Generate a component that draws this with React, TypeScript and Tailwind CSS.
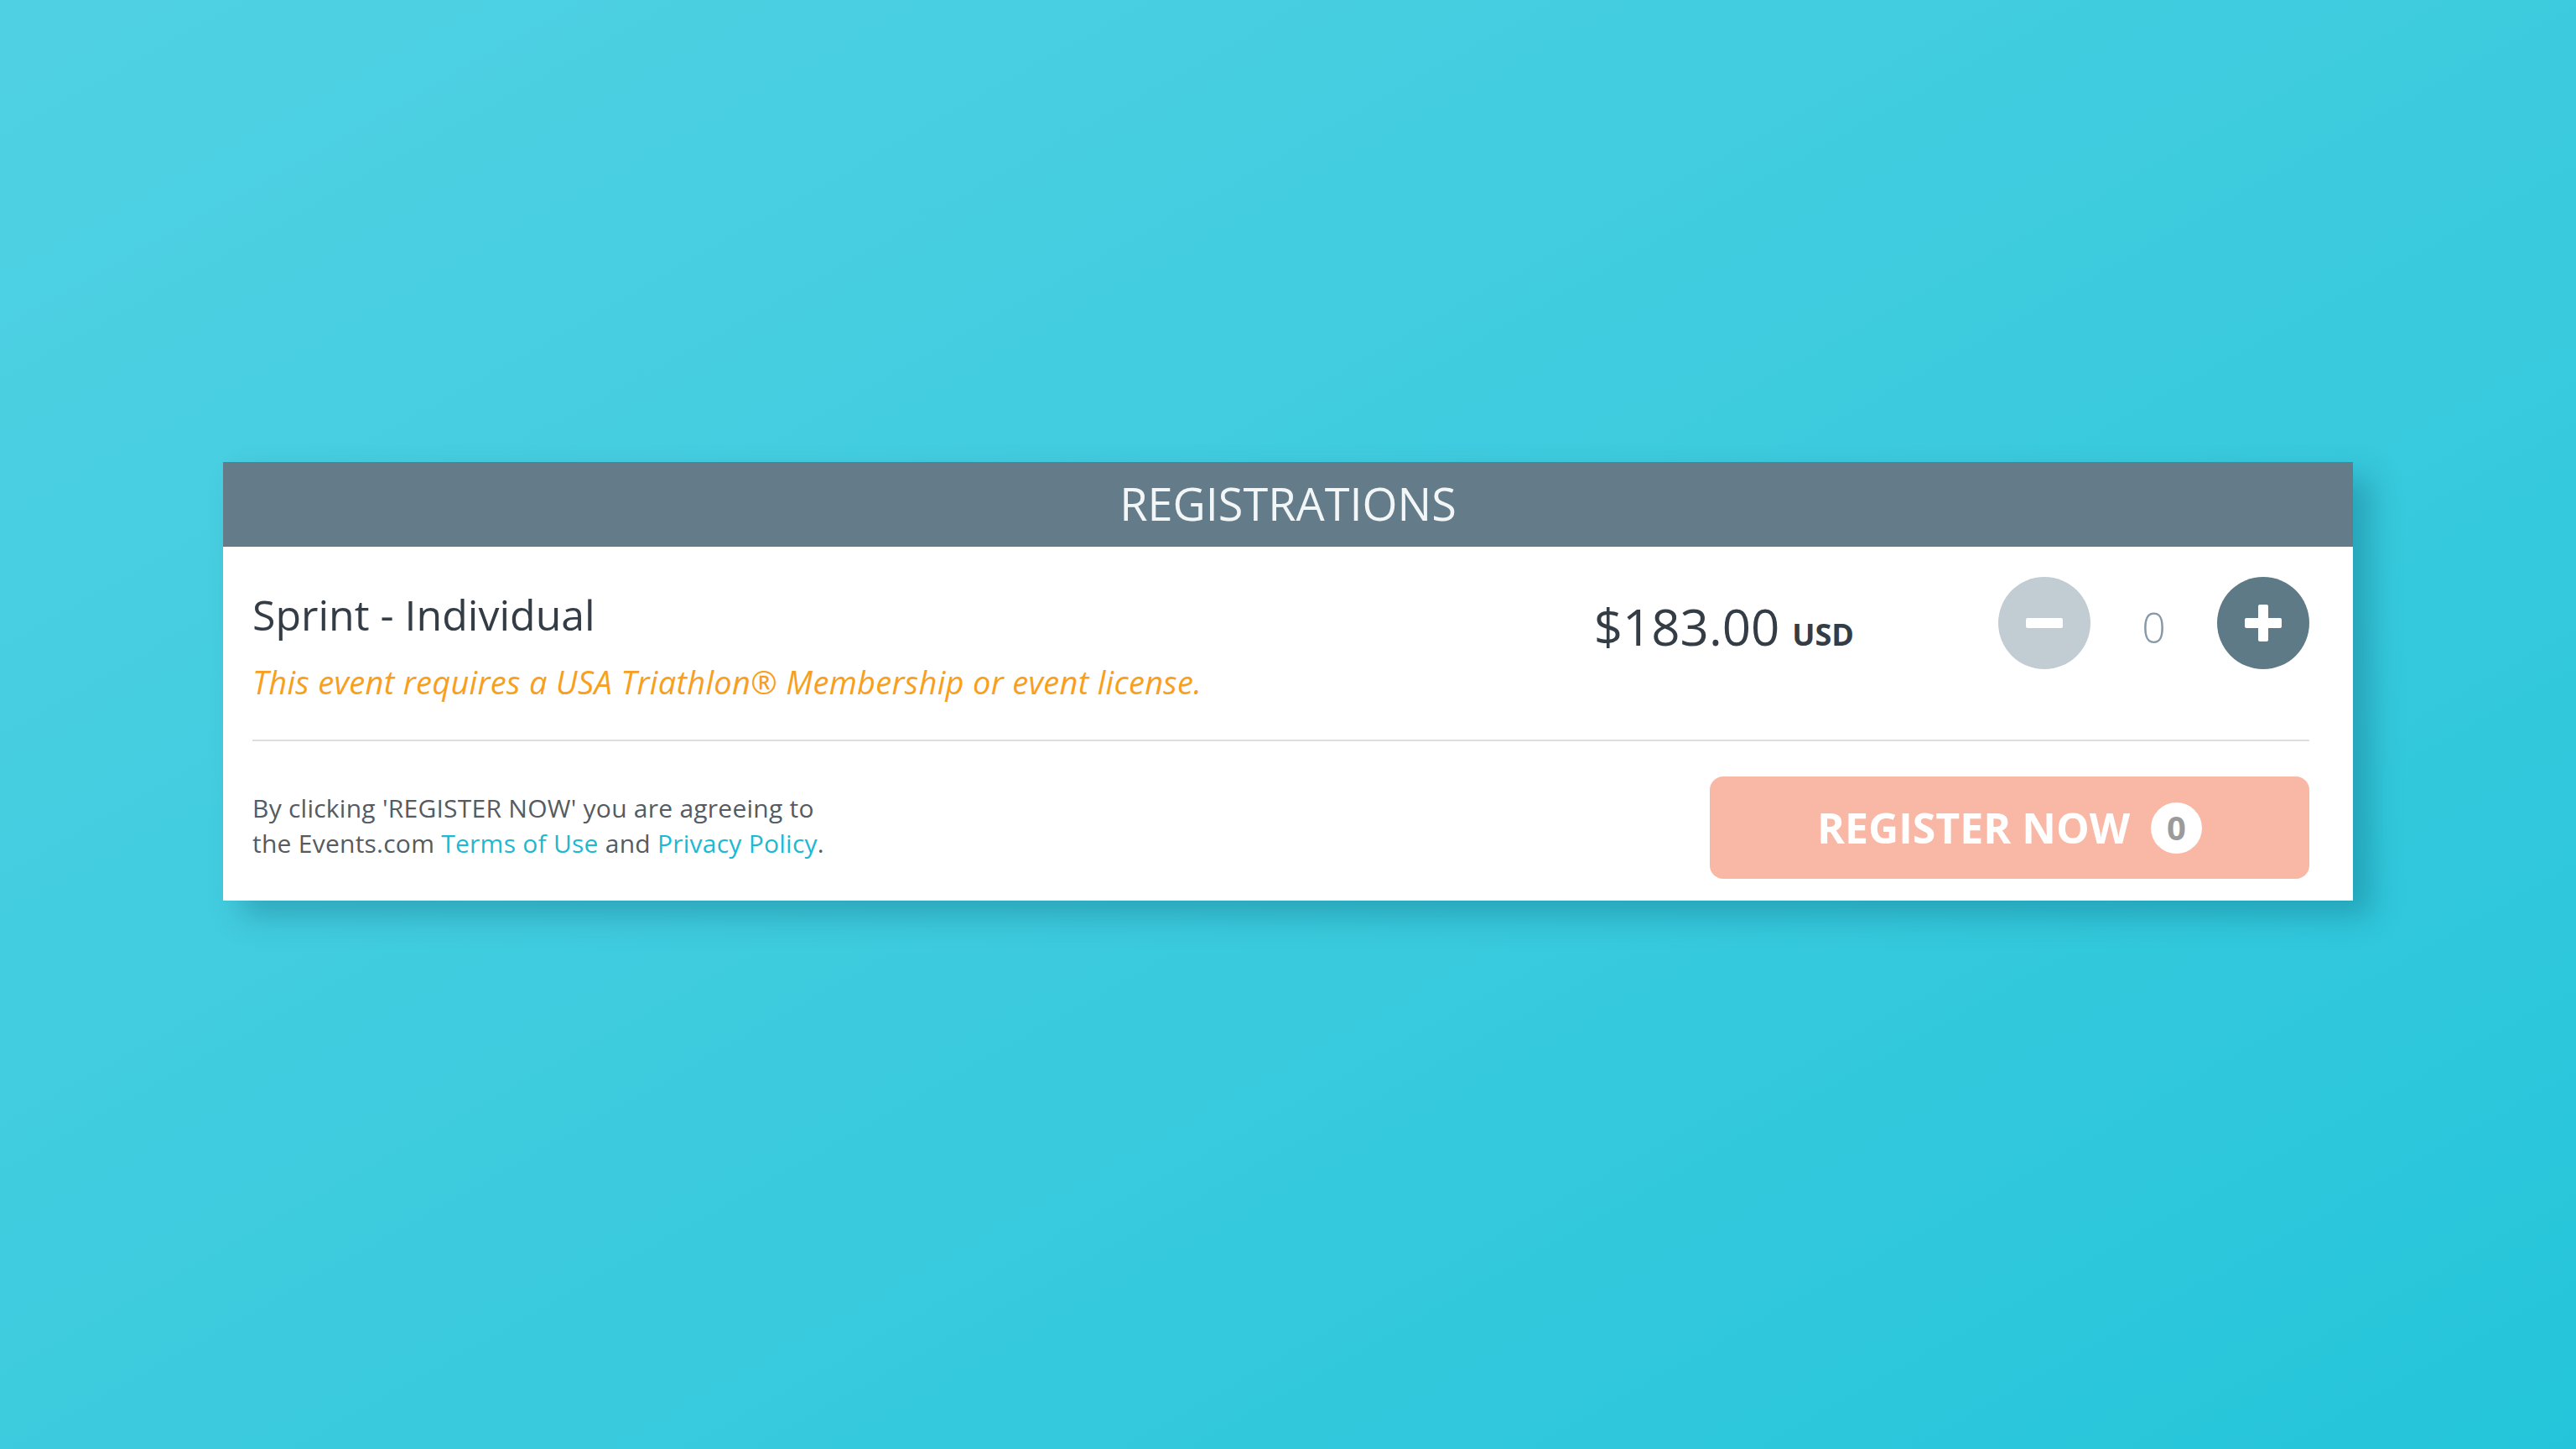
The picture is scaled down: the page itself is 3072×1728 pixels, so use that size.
const font = "font-['Open_Sans',sans-serif]";

function Stepper({ count }: { count: number }) {
  return (
    <div className="flex items-center">
      <button className="w-[110px] h-[110px] rounded-full bg-[#c1cdd3] flex items-center justify-center">
        <span className="block w-[44px] h-[12px] rounded-[2px] bg-white" />
      </button>
      <div className="w-[151px] text-center text-[50px] font-light leading-[60px] text-[#8798a6] pt-[10px]">
        {count}
      </div>
      <button className="w-[110px] h-[110px] rounded-full bg-[#5f7a87] flex items-center justify-center">
        <span className="relative block w-[44px] h-[44px]">
          <span className="absolute left-0 top-[16px] w-[44px] h-[12px] rounded-[2px] bg-white" />
          <span className="absolute top-0 left-[16px] w-[12px] h-[44px] rounded-[2px] bg-white" />
        </span>
      </button>
    </div>
  );
}

export default function App() {
  const count = 0;

  return (
    <div className={`min-h-screen w-full bg-linear-to-br from-[#4fd1e3] to-[#24c5da] pt-[551px] ${font}`}>
      <div className="w-[2540px] mx-auto bg-white shadow-[22px_18px_34px_rgba(0,70,90,0.28)]">
        <div className="h-[101px] bg-[#647b8a] flex items-center justify-center">
          <h2 className="-mt-[3px] text-[54px] leading-none text-[#f3f6f7]">REGISTRATIONS</h2>
        </div>

        <div className="pl-[35px] pr-[52px]">
          <div className="flex items-start justify-between pt-[36px]">
            <div>
              <div className="mt-[16px] text-[50px] leading-[58px] text-[#343d46]">Sprint - Individual</div>
              <div className="mt-[27px] text-[38px] leading-[48px] tracking-[0.3px] italic text-[#f8a01e]">
                This event requires a USA Triathlon® Membership or event license.
              </div>
            </div>

            <div className="flex items-start">
              <div className="mt-[29px] mr-[172px] flex items-baseline leading-[60px] text-[#343d46]">
                <span className="text-[60px]">$183.00</span>
                <span className="ml-[15px] text-[36px] font-bold">USD</span>
              </div>
              <Stepper count={count} />
            </div>
          </div>

          <div className="mt-[45px] h-[2px] bg-[#dedede]" />

          <div className="flex items-center justify-between pt-[42px] pb-[26px]">
            <p className="-mt-[4px] text-[30px] leading-[42px] tracking-[0.25px] text-[#555b60]">
              By clicking 'REGISTER NOW' you are agreeing to
              <br />
              the Events.com <a className="text-[#1cb9d3]">Terms of Use</a> and{" "}
              <a className="text-[#1cb9d3]">Privacy Policy</a>.
            </p>

            <button
              disabled={count === 0}
              className="w-[715px] h-[122px] rounded-[16px] bg-[#f9b8a6] flex items-center justify-center gap-[25px]"
            >
              <span className="text-[50px] font-bold text-white leading-none">REGISTER NOW</span>
              <span className="w-[61px] h-[61px] rounded-full bg-white flex items-center justify-center text-[40px] font-bold text-[#9b9b9b] leading-none">
                {count}
              </span>
            </button>
          </div>
        </div>
      </div>
    </div>
  );
}
